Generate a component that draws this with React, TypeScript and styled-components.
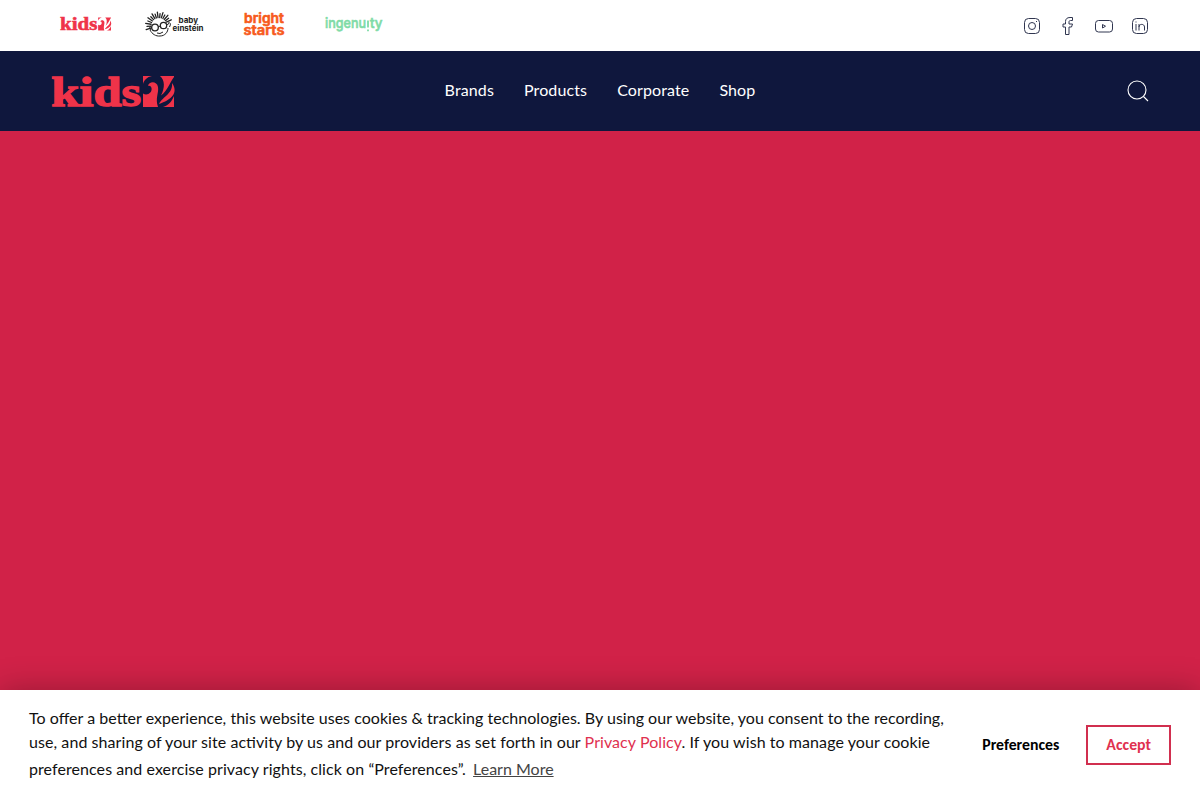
import React from "react";
import styled, { createGlobalStyle } from "styled-components";

const GlobalStyle = createGlobalStyle`
  * { box-sizing: border-box; }
  body { margin: 0; font-family: Lato, Carlito, sans-serif; font-size: 16px; color: #111; overflow: hidden; }
  a { color: inherit; text-decoration: none; }
  svg { display: block; overflow: visible; }
`;

const Page = styled.div`
  height: 100vh;
  display: flex;
  flex-direction: column;
`;

const TopBar = styled.div`
  height: 51px;
  flex: none;
  display: flex;
  justify-content: space-between;
  background: #fff;
  padding: 0 50px 0 60px;
`;

const BrandList = styled.div`
  display: flex;
  align-items: flex-start;
  padding-top: 9px;
`;

const BrandLink = styled.a<{ $gap: number; $drop?: number }>`
  margin-right: ${(p) => p.$gap}px;
  padding-top: ${(p) => p.$drop ?? 0}px;
`;

const SocialList = styled.div`
  display: flex;
  align-items: center;
  gap: 16px;
`;

const Header = styled.header`
  height: 80px;
  flex: none;
  display: grid;
  grid-template-columns: 1fr auto 1fr;
  align-items: center;
  padding: 0 51px;
  background: #0f173d;
  color: #fff;
`;

const Nav = styled.nav`
  display: flex;
  gap: 30px;
  line-height: 24px;
  padding-bottom: 2px;
  letter-spacing: 0.12px;
`;

const SearchButton = styled.button`
  justify-self: end;
  border: 0;
  padding: 0;
  background: none;
  color: #fff;
`;

const Hero = styled.main`
  flex: 1;
  background: #d12248;
`;

const CookieBar = styled.section`
  position: relative;
  height: 110px;
  flex: none;
  display: flex;
  align-items: center;
  background: #fff;
  padding: 0 29px;
  box-shadow: 0 0 30px rgba(0, 0, 0, 0.28);
`;

const Message = styled.p`
  margin: 0;
  padding-bottom: 4px;
  width: 924px;
  line-height: 24px;
  color: #111;
  font-feature-settings: "liga" 1;
`;

const Tracked = styled.span<{ $spacing: number }>`
  letter-spacing: ${(p) => p.$spacing}px;
`;

const PolicyLink = styled.a`
  color: #e0314f;
`;

const LearnMore = styled.a`
  display: inline-block;
  padding: 3px 0 0 3px;
  color: #444;
  letter-spacing: 0;
  text-decoration: underline;
`;

const Actions = styled.div`
  display: flex;
  align-items: center;
  margin-left: auto;
  gap: 27px;
`;

const Button = styled.button<{ $outlined?: boolean }>`
  height: 40px;
  padding: ${(p) => (p.$outlined ? "0 18px 2px" : "0 0 2px")};
  border: ${(p) => (p.$outlined ? "2px solid #d12f4f" : "0")};
  background: none;
  color: ${(p) => (p.$outlined ? "#e0314f" : "#000")};
  font: 700 15.8px Carlito, Lato, sans-serif;
`;

const KidsLogo = ({ width, height }: { width: number; height: number }) => (
  <svg width={width} height={height} viewBox="0 0 123 33" preserveAspectRatio="none" fill="#ef3349">
    <text
      x="0.300"
      y="31.300"
      fontFamily="Liberation Serif, serif"
      fontWeight="700"
      fontSize="43"
      textLength="90"
      lengthAdjust="spacingAndGlyphs"
      stroke="#ef3349"
      strokeWidth="1.300"
    >
      kids
    </text>
    <g transform="translate(92 1)">
      <path d="M0 0H9C4 1 1 4 0 8Z" />
      <path d="M0 31V17.500C4 20 9.500 17 8.500 12C8 10 6.500 9.500 5 10C6 5 14 5 15 11C16 17 12 22 15 31Z" />
      <path d="M17 0H31V1C26 8 25 14 18 19.500C22 12 22 4 17 0Z" />
      <path d="M16 28C20 20 30 18 29 7C36 17 28 24 16 28Z" />
      <path d="M20 31C26 29 29 25 31 20V31Z" />
    </g>
  </svg>
);

const rayAngles = [-108, -94, -81, -68, -55, -43, -31, -19, -7, 5, 17, 29, 41, 53, 65];

const BabyEinsteinLogo = () => (
  <svg width="60" height="29" viewBox="0 0 60 29" fill="none" stroke="#222">
    {rayAngles.map((angle, i) => (
      <path
        key={angle}
        d={i % 2 ? "M0 -8V-12" : "M0 -8V-13.500"}
        strokeWidth="1.300"
        strokeLinecap="round"
        transform={`translate(14 16.500) rotate(${angle})`}
      />
    ))}
    <path d="M5 21C7 25 11 27.500 15 27C20 27 23 23 23 19M12 24Q15 25.500 18 23M23 14Q27 13 24.500 18M5.500 17Q4 18 5.500 21" />
    <circle cx="10" cy="18.500" r="3.300" strokeWidth="1.300" />
    <circle cx="18.500" cy="16.500" r="3.200" strokeWidth="1.300" />
    <path d="M13 18L15.500 17M21.500 16L24 14.500" />
    <g fill="#222" fontFamily="Inter, sans-serif" fontWeight="700" fontSize="8" stroke="none">
      <text x="33.500" y="14" textLength="19.500" lengthAdjust="spacingAndGlyphs">baby</text>
      <text x="27.500" y="21.500" textLength="31" lengthAdjust="spacingAndGlyphs">einstein</text>
    </g>
  </svg>
);

const BrightStartsLogo = () => (
  <svg width="44" height="30" viewBox="0 0 44 30" fill="#f75a1c" stroke="#f75a1c" strokeWidth="0.600" strokeLinejoin="round" fontFamily="Inter, sans-serif" fontWeight="600" fontSize="13.500">
    <text x="1" y="13.500" textLength="40" lengthAdjust="spacingAndGlyphs">bright</text>
    <text x="0.500" y="25.500" textLength="41" lengthAdjust="spacingAndGlyphs">starts</text>
  </svg>
);

const IngenuityLogo = () => (
  <svg width="58" height="29" viewBox="0 0 58 29" fill="#7edba6" stroke="#7edba6" strokeWidth="0.600" fontFamily="Inter, sans-serif" fontWeight="500" fontSize="14.500">
    <text x="0" y="19" textLength="41" lengthAdjust="spacingAndGlyphs">ingenu</text>
    <path d="M43 11.500V18.500M43 20.500V22.200" strokeWidth="1.800" />
    <text x="45" y="19" textLength="12.500" lengthAdjust="spacingAndGlyphs">ty</text>
  </svg>
);

const SocialIcon = ({ children }: { children: React.ReactNode }) => (
  <svg width="20" height="20" viewBox="0 0 20 20" fill="none" stroke="#303650" strokeWidth="1" strokeLinejoin="round">
    {children}
  </svg>
);

export default function App() {
  return (
    <Page>
      <GlobalStyle />
      <TopBar>
        <BrandList>
          <BrandLink $gap={34} $drop={8} href="#"><KidsLogo width={51} height={14} /></BrandLink>
          <BrandLink $gap={38} href="#"><BabyEinsteinLogo /></BrandLink>
          <BrandLink $gap={38} href="#"><BrightStartsLogo /></BrandLink>
          <BrandLink $gap={0} href="#"><IngenuityLogo /></BrandLink>
        </BrandList>
        <SocialList>
          <SocialIcon>
            <rect x="2.500" y="2.500" width="15" height="15" rx="4" />
            <circle cx="10" cy="10" r="3.500" />
            <path d="M14 5.500h1" />
          </SocialIcon>
          <SocialIcon>
            <path d="M14.500 1.500H12C9 1.500 7.500 3 7.500 5.500V8H5V11H7.500V18.500H11V11H13.500L14.500 8H11V6C11 5 11.500 4.500 12.500 4.500H14.500Z" />
          </SocialIcon>
          <SocialIcon>
            <rect x="1.500" y="4.500" width="17" height="11.500" rx="3" />
            <path d="M8.500 8.500V12L11.500 10.200Z" />
          </SocialIcon>
          <SocialIcon>
            <rect x="2.500" y="2.500" width="15" height="15" rx="4" />
            <path d="M6 8V14.500M6 5.500V6.500M9 14.500V8M9 11C9 7.500 14.500 7.500 14.500 11V14.500" />
          </SocialIcon>
        </SocialList>
      </TopBar>
      <Header>
        <KidsLogo width={123} height={33} />
        <Nav>
          <a href="#">Brands</a>
          <a href="#">Products</a>
          <a href="#">Corporate</a>
          <a href="#">Shop</a>
        </Nav>
        <SearchButton aria-label="Search">
          <svg width="22" height="22" viewBox="0 0 22 22" fill="none" stroke="currentColor" strokeWidth="1.100">
            <circle cx="10" cy="10" r="9" />
            <path d="M16.500 16.500L21 21" />
          </svg>
        </SearchButton>
      </Header>
      <Hero />
      <CookieBar>
        <Message>
          <Tracked $spacing={0.023}>
            To offer a better experience, this website uses cookies &amp; tracking technologies. By using our website, you consent to the recording,{" "}
          </Tracked>
          <Tracked $spacing={0.07}>
            use, and sharing of your site activity by us and our providers as set forth in our{" "}
            <PolicyLink href="#">Privacy Policy</PolicyLink>. If you wish to manage your cookie preferences and exercise privacy rights, click on “Preferences”.{" "}
            <LearnMore href="#">Learn More</LearnMore>
          </Tracked>
        </Message>
        <Actions>
          <Button>Preferences</Button>
          <Button $outlined>Accept</Button>
        </Actions>
      </CookieBar>
    </Page>
  );
}
